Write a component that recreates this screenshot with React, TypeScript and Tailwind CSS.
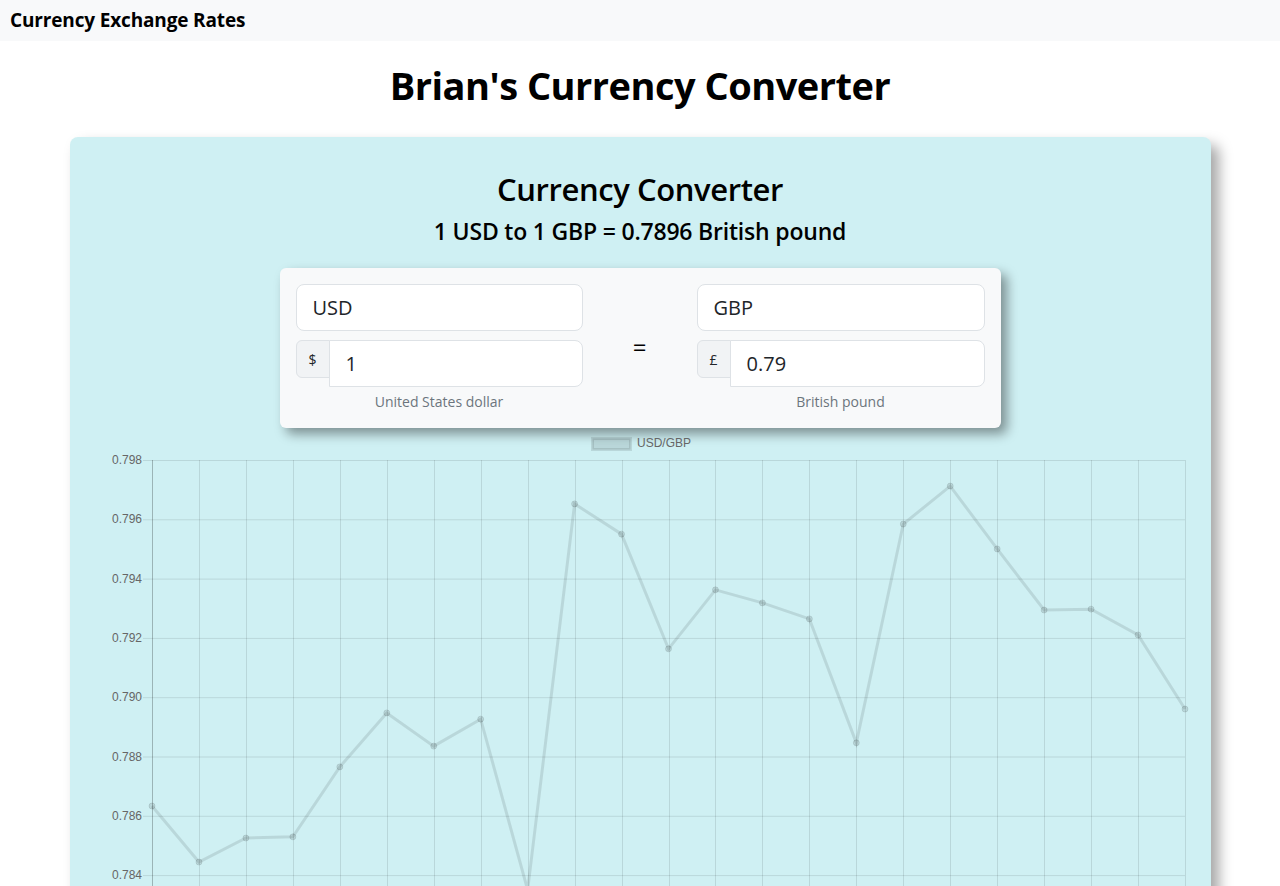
import React from 'react';

const rates = [
  0.78633, 0.78444, 0.78525, 0.78529, 0.78765, 0.78947, 0.78835, 0.78926, 0.7835, 0.79652, 0.7955, 0.79163,
  0.79362, 0.79318, 0.79264, 0.78846, 0.79584, 0.79712, 0.795, 0.79294, 0.79297, 0.7921, 0.7896,
];

const ticks = [0.798, 0.796, 0.794, 0.792, 0.79, 0.788, 0.786, 0.784, 0.782];

const X0 = 82;
const X1 = 1115;
const Y0 = 32;
const STEP = 59.3;

const xAt = (i: number) => X0 + ((X1 - X0) / (rates.length - 1)) * i;
const yAt = (v: number) => Y0 + ((0.798 - v) / 0.002) * STEP;

function RateChart() {
  const bottom = yAt(0.782);
  const points = rates.map((r, i) => `${xAt(i)},${yAt(r)}`).join(' ');
  return (
    <svg width="1141" height="540" className="block" style={{ fontFamily: '"Liberation Sans", Arial, sans-serif' }}>
      {/* legend */}
      <rect x="522.5" y="10.5" width="38" height="11" fill="rgba(0,0,0,0.1)" stroke="rgba(0,0,0,0.1)" strokeWidth="3" />
      <text x="567" y="19" fontSize="12" fill="#666">USD/GBP</text>

      {/* horizontal grid + y labels */}
      {ticks.map((t) => (
        <g key={t}>
          <line x1={X0 - 9} x2={X1} y1={yAt(t) + 0.5} y2={yAt(t) + 0.5} stroke="rgba(0,0,0,0.1)" />
          <text x={X0 - 10} y={yAt(t) + 4} fontSize="12" fill="#666" textAnchor="end">
            {t.toFixed(3)}
          </text>
        </g>
      ))}

      {/* vertical grid */}
      {rates.map((_, i) => (
        <line
          key={i}
          x1={Math.round(xAt(i)) + 0.5}
          x2={Math.round(xAt(i)) + 0.5}
          y1={Y0}
          y2={bottom + 10}
          stroke={i === 0 ? 'rgba(0,0,0,0.25)' : 'rgba(0,0,0,0.1)'}
        />
      ))}

      <polyline points={points} fill="none" stroke="rgba(0,0,0,0.1)" strokeWidth="3" strokeLinejoin="miter" />
      {rates.map((r, i) => (
        <circle key={i} cx={xAt(i)} cy={yAt(r)} r="3" fill="rgba(0,0,0,0.1)" stroke="rgba(0,0,0,0.1)" />
      ))}
    </svg>
  );
}

function CurrencyColumn({ code, symbol, amount, name }: { code: string; symbol: string; amount: string; name: string }) {
  return (
    <div className="flex flex-col">
      <div className="h-[47px] rounded-lg border border-[#dee2e6] bg-white px-4 flex items-center text-[20px] text-[#212529]">
        {code}
      </div>
      <div className="mt-[9px] flex items-start">
        <div className="h-[38px] w-[34px] rounded-l-md border border-[#dee2e6] bg-[#f1f3f5] flex items-center justify-center text-[14px] text-[#212529]">
          {symbol}
        </div>
        <div className="h-[47px] flex-1 -ml-px rounded-r-lg border border-[#dee2e6] bg-white pl-4 flex items-center text-[20px] text-[#212529]">
          {amount}
        </div>
      </div>
      <div className="text-center text-[14px] leading-[21px] text-[#6c757d] mt-[4px]">{name}</div>
    </div>
  );
}

export default function App() {
  return (
    <div className="min-h-screen bg-white text-black" style={{ fontFamily: '"Open Sans", "Noto Sans", sans-serif' }}>
      <nav className="h-[41px] bg-[#f8f9fa] flex items-center px-[10px]">
        <span className="text-[19px] font-bold tracking-[-0.15px]">Currency Exchange Rates</span>
      </nav>

      <h1 className="mt-[20px] text-center text-[38px] leading-[48px] font-bold tracking-[-0.5px]">Brian's Currency Converter</h1>

      <div className="mt-[28px] mx-auto w-[1141px] rounded-lg bg-[#cff0f3] shadow-[8px_8px_14px_rgba(0,0,0,0.35)] pt-[33px] pb-6">
        <h2 className="text-center text-[31px] leading-[38px] font-semibold tracking-[-0.4px]">Currency Converter</h2>
        <h4 className="mt-[9px] text-center text-[23px] leading-[29px] font-semibold tracking-[-0.2px]">
          1 USD to 1 GBP = 0.7896 British pound
        </h4>

        <div className="mt-[22px] mx-auto w-[721px] rounded-md bg-[#f8f9fa] shadow-[6px_6px_12px_rgba(0,0,0,0.4)] p-4 grid grid-cols-[287px_1fr_288px] items-center">
          <CurrencyColumn code="USD" symbol="$" amount="1" name="United States dollar" />
          <div className="text-center text-[24px] font-medium -mt-[2px]">=</div>
          <CurrencyColumn code="GBP" symbol="£" amount="0.79" name="British pound" />
        </div>

        <RateChart />
      </div>
    </div>
  );
}
